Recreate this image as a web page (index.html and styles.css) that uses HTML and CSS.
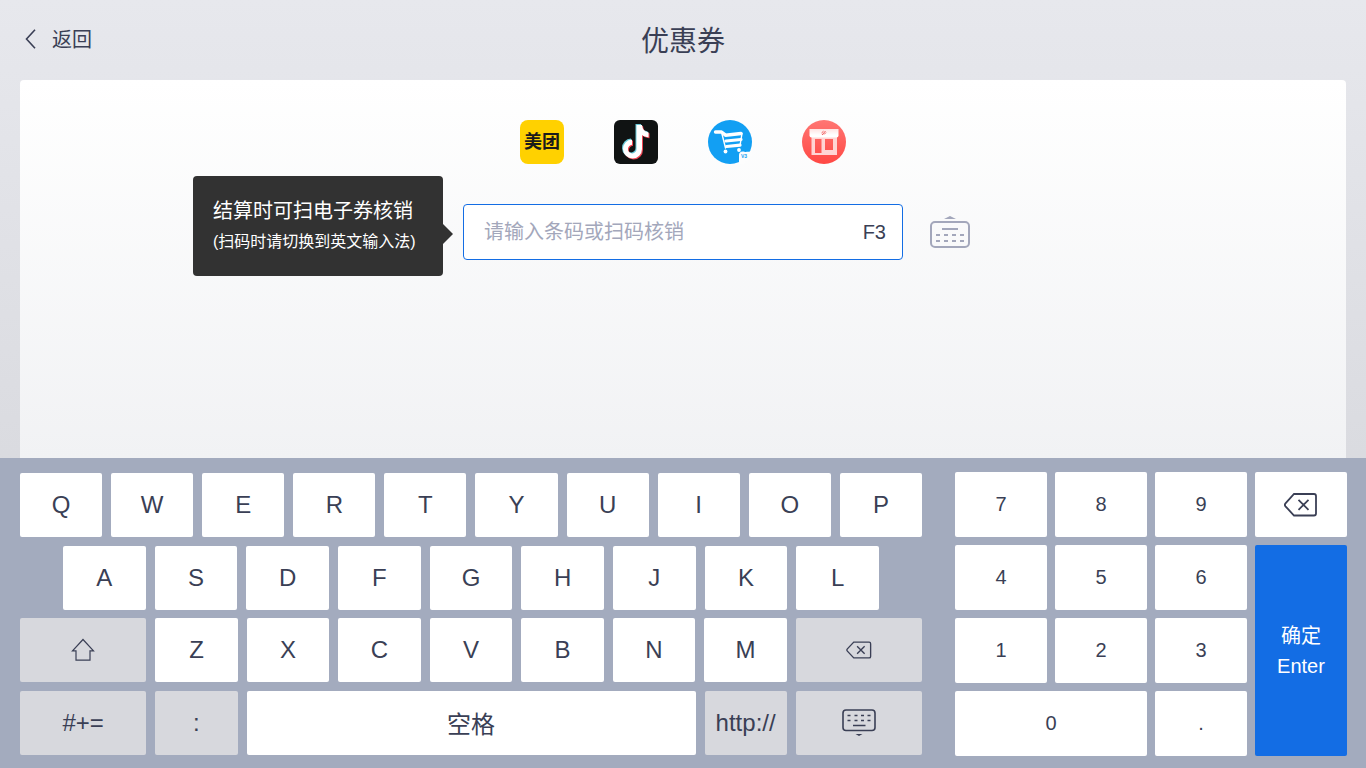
FILE: index.html
```html
<!DOCTYPE html>
<html lang="zh-CN">
<head>
  <meta charset="UTF-8" />
  <meta name="viewport" content="width=device-width, initial-scale=1.0"/>
  <title>优惠券</title>
  <link rel="stylesheet" href="styles.css">
</head>
<body>
  <header class="header">
    <a class="back" href="#">
      <svg width="12" height="20" viewBox="0 0 12 20" fill="none" stroke="#3a3f55" stroke-width="1.6"><path d="M11 .7 2.500 10l8.500 9.300"/></svg>
      返回
    </a>
    <h1>优惠券</h1>
  </header>

  <main class="panel">
    <!-- Coupon platforms -->
    <div class="platforms">
      <span class="platform meituan">美团</span>
      <svg class="platform" viewBox="0 0 44 44">
        <defs>
          <path id="note" d="M22.500 5h5.500c.5 4.500 2.800 6.800 6.500 7.200v5c-2.500 0-4.600-.8-6.500-2.200V29a9.500 9.500 0 1 1-10-9.500v5.300a4.300 4.300 0 1 0 4.500 4.200z"/>
        </defs>
        <rect width="44" height="44" rx="6" fill="#101313"/>
        <use href="#note" x="-1" y="-1" fill="#69c9d8"/>
        <use href="#note" x="1" y="1" fill="#ee4452"/>
        <use href="#note" fill="#fff"/>
      </svg>
      <svg class="platform" viewBox="0 0 44 44">
        <circle cx="22" cy="22" r="22" fill="#129ff3"/>
        <g fill="none" stroke="#fff" stroke-linecap="round" stroke-linejoin="round">
          <path d="M7.500 12h6l4 3.200 15.500-1.700" stroke-width="3.400"/>
          <path d="M18 21 33 19.500M18.500 26.500 32 25.200" stroke-width="3.200"/>
          <path d="M14 14l3.500 14M34 13.500l-2 12" stroke-width="1.400"/>
        </g>
        <circle cx="17.500" cy="31.500" r="1.900" fill="#fff"/>
        <circle cx="31" cy="30" r="1.900" fill="#fff"/>
        <path d="M31 44v-9c0-2 1.500-3.500 3.500-3.500 2 0 3 .8 4 .3H44V36c-2 .5-3 2-4 4-.6 1.500-2.500 1-3.500 2.500L35 44z" fill="#fdfdfd"/>
        <text x="33" y="37.500" class="badge-text">V3</text>
      </svg>
      <svg class="platform" viewBox="0 0 44 44">
        <defs>
          <linearGradient id="shopBg" x1="0" y1="0" x2="0" y2="1">
            <stop offset="0" stop-color="#ff7673"/>
            <stop offset="1" stop-color="#ff4844"/>
          </linearGradient>
          <linearGradient id="shopRoof" x1="0" y1="0" x2="0" y2="1">
            <stop offset="0" stop-color="#ffe3e2"/>
            <stop offset=".7" stop-color="#fff"/>
          </linearGradient>
        </defs>
        <circle cx="22" cy="22" r="22" fill="url(#shopBg)"/>
        <path fill="#ffd5d4" fill-rule="evenodd" d="M9.500 16H35v19H9.500zM13 19v14h6.500V19zM23 19v11h8V19z"/>
        <path fill="url(#shopRoof)" d="M7.500 9h29v6.500a2 2 0 0 1-2 2h-25a2 2 0 0 1-2-2z"/>
        <path d="M20 15l3.500-4M19.500 13l2-1.800M22 14.500l2-2" stroke="#f05a5a" stroke-width="1" fill="none"/>
      </svg>
    </div>

    <!-- Code input -->
    <div class="search">
      <div class="tip" role="tooltip">
        <p class="tip-title">结算时可扫电子券核销</p>
        <p class="tip-note">(扫码时请切换到英文输入法)</p>
      </div>
      <div class="search-box">
        <input type="text" id="code" placeholder="请输入条码或扫码核销" aria-label="请输入条码或扫码核销" />
        <label for="code">F3</label>
      </div>
      <button type="button" class="toggle" aria-label="键盘">
        <svg width="42" height="34" viewBox="0 0 42 34" fill="none" stroke="#a3a7bb" stroke-width="2">
          <path d="M15 3 21 0l6 3z" fill="#a3a7bb" stroke="none"/>
          <rect x="2" y="6" width="38" height="25" rx="4"/>
          <path d="M13 13h16M7 19h4M15 19h4M23 19h4M31 19h4M7 25h4M15 25h4M23 25h4M31 25h4"/>
        </svg>
      </button>
    </div>
  </main>

  <!-- Virtual keyboard -->
  <section class="keyboard">
    <div class="letters">
      <div class="row">
        <button class="key">Q</button>
        <button class="key">W</button>
        <button class="key">E</button>
        <button class="key">R</button>
        <button class="key">T</button>
        <button class="key">Y</button>
        <button class="key">U</button>
        <button class="key">I</button>
        <button class="key">O</button>
        <button class="key">P</button>
      </div>
      <div class="row row-inset">
        <button class="key">A</button>
        <button class="key">S</button>
        <button class="key">D</button>
        <button class="key">F</button>
        <button class="key">G</button>
        <button class="key">H</button>
        <button class="key">J</button>
        <button class="key">K</button>
        <button class="key">L</button>
      </div>
      <div class="row">
        <button class="key gray wide" aria-label="Shift">
          <svg width="24" height="24" viewBox="0 0 24 24" fill="none" stroke="#3a3f55" stroke-width="1.200"><path d="M12 1.500 22.500 12.800h-3.500v9.400H5v-9.400H1.500z"/></svg>
        </button>
        <button class="key">Z</button>
        <button class="key">X</button>
        <button class="key">C</button>
        <button class="key">V</button>
        <button class="key">B</button>
        <button class="key">N</button>
        <button class="key">M</button>
        <button class="key gray wide" aria-label="Backspace">
          <svg width="26" height="18" viewBox="0 0 34 24" fill="none" stroke="#3a3f55" stroke-width="1.800"><path d="M10 1.500h20.500a2 2 0 0 1 2 2v17a2 2 0 0 1-2 2H10L1.500 13.500q-1.300-1.500 0-3zM14.500 7l10 10M24.500 7l-10 10"/></svg>
        </button>
      </div>
      <div class="row">
        <button class="key gray wide">#+=</button>
        <button class="key gray">:</button>
        <button class="key space">空格</button>
        <button class="key gray">http://</button>
        <button class="key gray wide" aria-label="收起键盘">
          <svg width="34" height="28" viewBox="0 0 34 28" fill="none" stroke="#3a3f55" stroke-width="1.600">
            <rect x="1" y="1" width="32" height="20.500" rx="3"/>
            <path d="M5.500 6.500h3M12.500 6.500h3M19 6.500h3M25.500 6.500h3M5.500 11.500h3M12.500 11.500h3M19 11.500h3M25.500 11.500h3M11 16.500h12.500"/>
            <path d="M13.500 25h7L17 27z" fill="#3a3f55" stroke="none"/>
          </svg>
        </button>
      </div>
    </div>

    <div class="numbers">
      <button class="key">7</button>
      <button class="key">8</button>
      <button class="key">9</button>
      <button class="key" aria-label="Backspace">
        <svg width="34" height="24" viewBox="0 0 34 24" fill="none" stroke="#3a3f55" stroke-width="1.800"><path d="M10 1h20a2 2 0 0 1 2 2v17.500a2 2 0 0 1-2 2H10L1.500 13.300q-1.300-1.500 0-3zM14.500 6.800l10 10M24.500 6.800l-10 10"/></svg>
      </button>
      <button class="key">4</button>
      <button class="key">5</button>
      <button class="key">6</button>
      <button class="key enter">确定<br>Enter</button>
      <button class="key">1</button>
      <button class="key">2</button>
      <button class="key">3</button>
      <button class="key zero">0</button>
      <button class="key">.</button>
    </div>
  </section>
</body>
</html>
```
FILE: styles.css
```css
* {
  box-sizing: border-box;
}

body {
  margin: 0;
  min-height: 100vh;
  display: flex;
  flex-direction: column;
  font-family: "Liberation Sans", "Noto Sans CJK SC", sans-serif;
  color: #3a3f55;
  background: linear-gradient(#e7e8ed, #d1d2d7);
}

button,
input {
  font-family: inherit;
  color: inherit;
}

.header {
  display: grid;
  grid-template-columns: 1fr auto 1fr;
  align-items: center;
  height: 80px;
  padding: 0 24px 3px;
}

.header h1 {
  margin: 0;
  font-size: 28px;
  font-weight: 400;
}

.back {
  display: flex;
  align-items: center;
  gap: 16px;
  font-size: 20px;
  color: inherit;
  text-decoration: none;
}

.panel {
  flex: 1;
  display: flex;
  flex-direction: column;
  align-items: center;
  gap: 40px;
  margin: 0 20px;
  padding-top: 40px;
  border-radius: 4px 4px 0 0;
  background: linear-gradient(#fff, #f1f2f4);
}

.platforms {
  display: flex;
  gap: 50px;
}

.platform {
  width: 44px;
  height: 44px;
}

.meituan {
  border-radius: 8px;
  background: #ffd100;
  color: #1b1b1b;
  font-size: 18px;
  font-weight: 700;
  line-height: 44px;
  text-align: center;
}

.badge-text {
  font-size: 5px;
  font-weight: 700;
  fill: #129ff3;
}

.search {
  position: relative;
  width: 440px;
}

.search-box {
  display: flex;
  align-items: center;
  height: 56px;
  padding: 0 16px 0 20px;
  border: 1px solid #136de4;
  border-radius: 4px;
  background: #fff;
  font-size: 20px;
}

.search-box input {
  flex: 1;
  min-width: 0;
  padding: 0;
  border: none;
  outline: none;
  background: none;
  font-size: 20px;
}

.search-box input::placeholder {
  color: #a3a7bb;
}

.toggle {
  position: absolute;
  left: calc(100% + 26px);
  top: 12px;
  padding: 0;
  border: none;
  background: none;
  cursor: pointer;
}

.toggle svg {
  display: block;
}

.tip {
  position: absolute;
  right: calc(100% + 20px);
  top: -28px;
  width: 250px;
  height: 100px;
  padding: 20px;
  border-radius: 4px;
  background: #323232;
  color: #fff;
  white-space: nowrap;
}

.tip::after {
  content: "";
  position: absolute;
  left: 100%;
  top: 48px;
  border: 10px solid transparent;
  border-left-color: #323232;
  border-right-width: 0;
}

.tip p {
  margin: 0;
}

.tip-title {
  font-size: 20px;
  line-height: 30px;
}

.tip-note {
  font-size: 16px;
  line-height: 32px;
}

.keyboard {
  display: flex;
  gap: 33px;
  padding: 14px 19px 12px 20px;
  background: #a3abbe;
}

.letters {
  flex: 902 1 0;
  display: flex;
  flex-direction: column;
  justify-content: space-between;
  padding: 1px 0;
}

.row {
  display: flex;
  gap: 9px;
  height: 64px;
}

.row-inset {
  padding: 0 43px;
}

.key {
  flex: 1 1 0;
  min-width: 0;
  padding: 0;
  border: none;
  border-radius: 2px;
  background: #fff;
  font-size: 24px;
  cursor: pointer;
}

.key svg {
  display: block;
  margin: 0 auto;
}

.gray {
  background: #d7d8dd;
}

.wide {
  flex: 0 0 14%;
}

.space {
  flex: 0 0 calc(50% - 2px);
}

.numbers {
  flex: 392 1 0;
  display: grid;
  grid-template-columns: repeat(4, 1fr);
  grid-auto-rows: 65px;
  gap: 8px;
}

.numbers .key {
  font-size: 20px;
}

.numbers .enter {
  grid-row: span 3;
  background: #136de4;
  color: #fff;
  line-height: 30px;
}

.numbers .zero {
  grid-column: span 2;
}
```
